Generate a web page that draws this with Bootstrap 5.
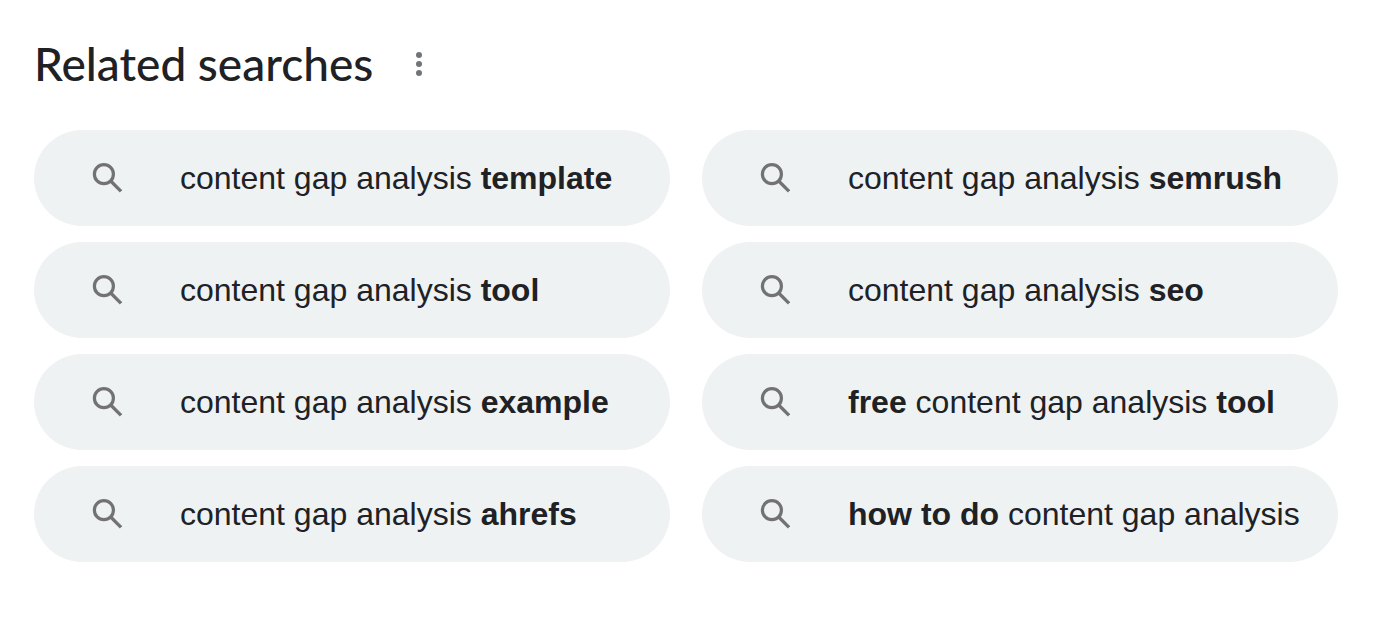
<!DOCTYPE html>
<html lang="en">
<head>
<meta charset="utf-8">
<meta name="viewport" content="width=device-width, initial-scale=1">
<title>Related searches</title>
<link rel="stylesheet" href="https://cdn.jsdelivr.net/npm/bootstrap@5.3.0/dist/css/bootstrap.min.css">
<style>
body { background: #fff; color: #202124; font-family: "Liberation Sans", Arial, sans-serif; }
.related { padding: 38px 38px 60px 34px; }
.related-header { gap: 34px; margin-bottom: 40px; }
.related-title { font-family: "Google Sans", Lato, sans-serif; font-size: 46px; font-weight: 500; line-height: 52px; }
.more-btn { width: 24px; height: 48px; color: #70757a; }
.related-grid { --bs-gutter-x: 32px; --bs-gutter-y: 16px; }
.search-pill { height: 96px; padding: 0 32px 0 58px; gap: 58px; background: #eef2f3; color: #202124; font-size: 32px; line-height: 40px; }
.search-pill svg { color: #727272; }
</style>
</head>
<body>
<main class="related container-fluid">
  <header class="related-header d-flex align-items-center">
    <h1 class="related-title mb-0">Related searches</h1>
    <button type="button" class="more-btn btn p-0 border-0 d-flex align-items-center justify-content-center" aria-label="About these results">
      <svg width="8" height="26" viewBox="0 0 8 26" fill="currentColor" aria-hidden="true"><circle cx="4" cy="4" r="3"/><circle cx="4" cy="13" r="3"/><circle cx="4" cy="22" r="3"/></svg>
    </button>
  </header>
  <svg class="d-none" aria-hidden="true"><symbol id="search" viewBox="0 0 30 30"><g fill="none" stroke="currentColor" stroke-width="3.2"><circle cx="11.9" cy="11.2" r="9.5"/><path d="M18.2 17.5 29 28.3"/></g></symbol></svg>
  <nav class="related-grid row row-cols-2" aria-label="Related searches">
    <div class="col"><a href="#" class="search-pill d-flex align-items-center rounded-pill text-decoration-none text-nowrap"><svg class="flex-shrink-0" width="30" height="30" aria-hidden="true"><use href="#search"/></svg><span>content gap analysis <b>template</b></span></a></div>
    <div class="col"><a href="#" class="search-pill d-flex align-items-center rounded-pill text-decoration-none text-nowrap"><svg class="flex-shrink-0" width="30" height="30" aria-hidden="true"><use href="#search"/></svg><span>content gap analysis <b>semrush</b></span></a></div>
    <div class="col"><a href="#" class="search-pill d-flex align-items-center rounded-pill text-decoration-none text-nowrap"><svg class="flex-shrink-0" width="30" height="30" aria-hidden="true"><use href="#search"/></svg><span>content gap analysis <b>tool</b></span></a></div>
    <div class="col"><a href="#" class="search-pill d-flex align-items-center rounded-pill text-decoration-none text-nowrap"><svg class="flex-shrink-0" width="30" height="30" aria-hidden="true"><use href="#search"/></svg><span>content gap analysis <b>seo</b></span></a></div>
    <div class="col"><a href="#" class="search-pill d-flex align-items-center rounded-pill text-decoration-none text-nowrap"><svg class="flex-shrink-0" width="30" height="30" aria-hidden="true"><use href="#search"/></svg><span>content gap analysis <b>example</b></span></a></div>
    <div class="col"><a href="#" class="search-pill d-flex align-items-center rounded-pill text-decoration-none text-nowrap"><svg class="flex-shrink-0" width="30" height="30" aria-hidden="true"><use href="#search"/></svg><span><b>free</b> content gap analysis <b>tool</b></span></a></div>
    <div class="col"><a href="#" class="search-pill d-flex align-items-center rounded-pill text-decoration-none text-nowrap"><svg class="flex-shrink-0" width="30" height="30" aria-hidden="true"><use href="#search"/></svg><span>content gap analysis <b>ahrefs</b></span></a></div>
    <div class="col"><a href="#" class="search-pill d-flex align-items-center rounded-pill text-decoration-none text-nowrap"><svg class="flex-shrink-0" width="30" height="30" aria-hidden="true"><use href="#search"/></svg><span><b>how to do</b> content gap analysis</span></a></div>
  </nav>
</main>
<script src="https://cdn.jsdelivr.net/npm/bootstrap@5.3.0/dist/js/bootstrap.bundle.min.js"></script>
</body>
</html>
